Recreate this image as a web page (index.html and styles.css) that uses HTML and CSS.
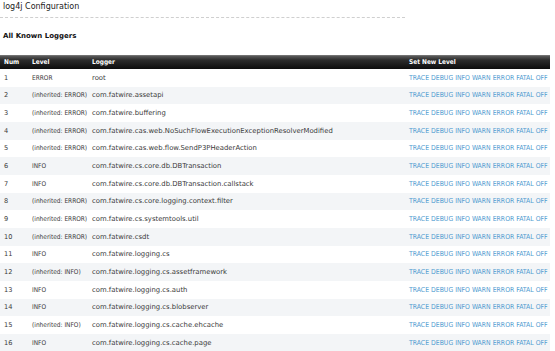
FILE: index.html
```html
<!DOCTYPE html>
<html>
<head>
<meta charset="utf-8">
<link rel="stylesheet" href="styles.css">
</head>
<body>
<div class="page">
  <h1 class="title">log4j Configuration</h1>
  <div class="rule"></div>
  <h2 class="subtitle">All Known Loggers</h2>
  <table class="loggers">
    <thead>
      <tr><th class="c-num">Num</th><th class="c-level">Level</th><th class="c-logger">Logger</th><th class="c-set">Set New Level</th></tr>
    </thead>
    <tbody id="rows"></tbody>
  </table>
</div>
<script>
var data = [
  ["ERROR","root"],
  ["(inherited: ERROR)","com.fatwire.assetapi"],
  ["(inherited: ERROR)","com.fatwire.buffering"],
  ["(inherited: ERROR)","com.fatwire.cas.web.NoSuchFlowExecutionExceptionResolverModified"],
  ["(inherited: ERROR)","com.fatwire.cas.web.flow.SendP3PHeaderAction"],
  ["INFO","com.fatwire.cs.core.db.DBTransaction"],
  ["INFO","com.fatwire.cs.core.db.DBTransaction.callstack"],
  ["(inherited: ERROR)","com.fatwire.cs.core.logging.context.filter"],
  ["(inherited: ERROR)","com.fatwire.cs.systemtools.util"],
  ["(inherited: ERROR)","com.fatwire.csdt"],
  ["INFO","com.fatwire.logging.cs"],
  ["(inherited: INFO)","com.fatwire.logging.cs.assetframework"],
  ["INFO","com.fatwire.logging.cs.auth"],
  ["INFO","com.fatwire.logging.cs.blobserver"],
  ["(inherited: INFO)","com.fatwire.logging.cs.cache.ehcache"],
  ["INFO","com.fatwire.logging.cs.cache.page"]
];
var levels = ["TRACE","DEBUG","INFO","WARN","ERROR","FATAL","OFF"];
var html = "";
data.forEach(function(d, i){
  html += '<tr><td class="num">' + (i+1) + '</td><td class="lvl">' + d[0] + '</td><td class="name">' + d[1] + '</td><td class="set">' +
    levels.map(function(l){ return '<a href="#">' + l + '</a>'; }).join(' ') + '</td></tr>';
});
document.getElementById("rows").innerHTML = html;
</script>
</body>
</html>
```
FILE: styles.css
```css
html, body {
  margin: 0;
  padding: 0;
  background: #fff;
}
body {
  font-family: "DejaVu Sans", Verdana, sans-serif;
  font-size: 6.5px;
  color: #3a3a3a;
}
.page {
  width: 550px;
  padding-top: 1px;
}
.title {
  margin: 0;
  padding: 0 3px;
  font-size: 8px;
  font-weight: normal;
  line-height: 12px;
  color: #222;
}
.rule {
  width: 405px;
  margin-top: 4px;
  border-top: 1px dashed #cfcfcf;
}
.subtitle {
  margin: 13px 0 0;
  padding: 0 3px;
  font-size: 7px;
  font-weight: bold;
  line-height: 10px;
  color: #111;
}
.loggers {
  margin-top: 14px;
  width: 550px;
  table-layout: fixed;
  border-collapse: collapse;
  border-spacing: 0;
}
.loggers th {
  height: 14px;
  padding: 0 4px;
  text-align: left;
  font-family: "DejaVu Sans Condensed", "DejaVu Sans", sans-serif;
  font-size: 6.5px;
  font-weight: bold;
  color: #fff;
  background: linear-gradient(#8a8a8a 0, #5a5a5a 1px, #2c2c2c 5px, #0d0d0d 100%);
}
.loggers td {
  height: 17.67px;
  padding: 0 4px;
  white-space: nowrap;
  overflow: hidden;
}
.loggers tbody tr:nth-child(even) td {
  background: #f3f5f7;
}
.c-num { width: 20px; }
.c-level { width: 52px; }
.c-set { width: 137px; }
.num { font-size: 6.6px; }
.lvl {
  font-family: "DejaVu Sans Condensed", "DejaVu Sans", sans-serif;
  font-size: 6.5px;
}
.name { font-size: 6.87px; }
.set {
  font-family: "DejaVu Sans Condensed", "DejaVu Sans", sans-serif;
  font-size: 6.85px;
}
.set a {
  color: #4f9bd0;
  text-decoration: none;
}
```
